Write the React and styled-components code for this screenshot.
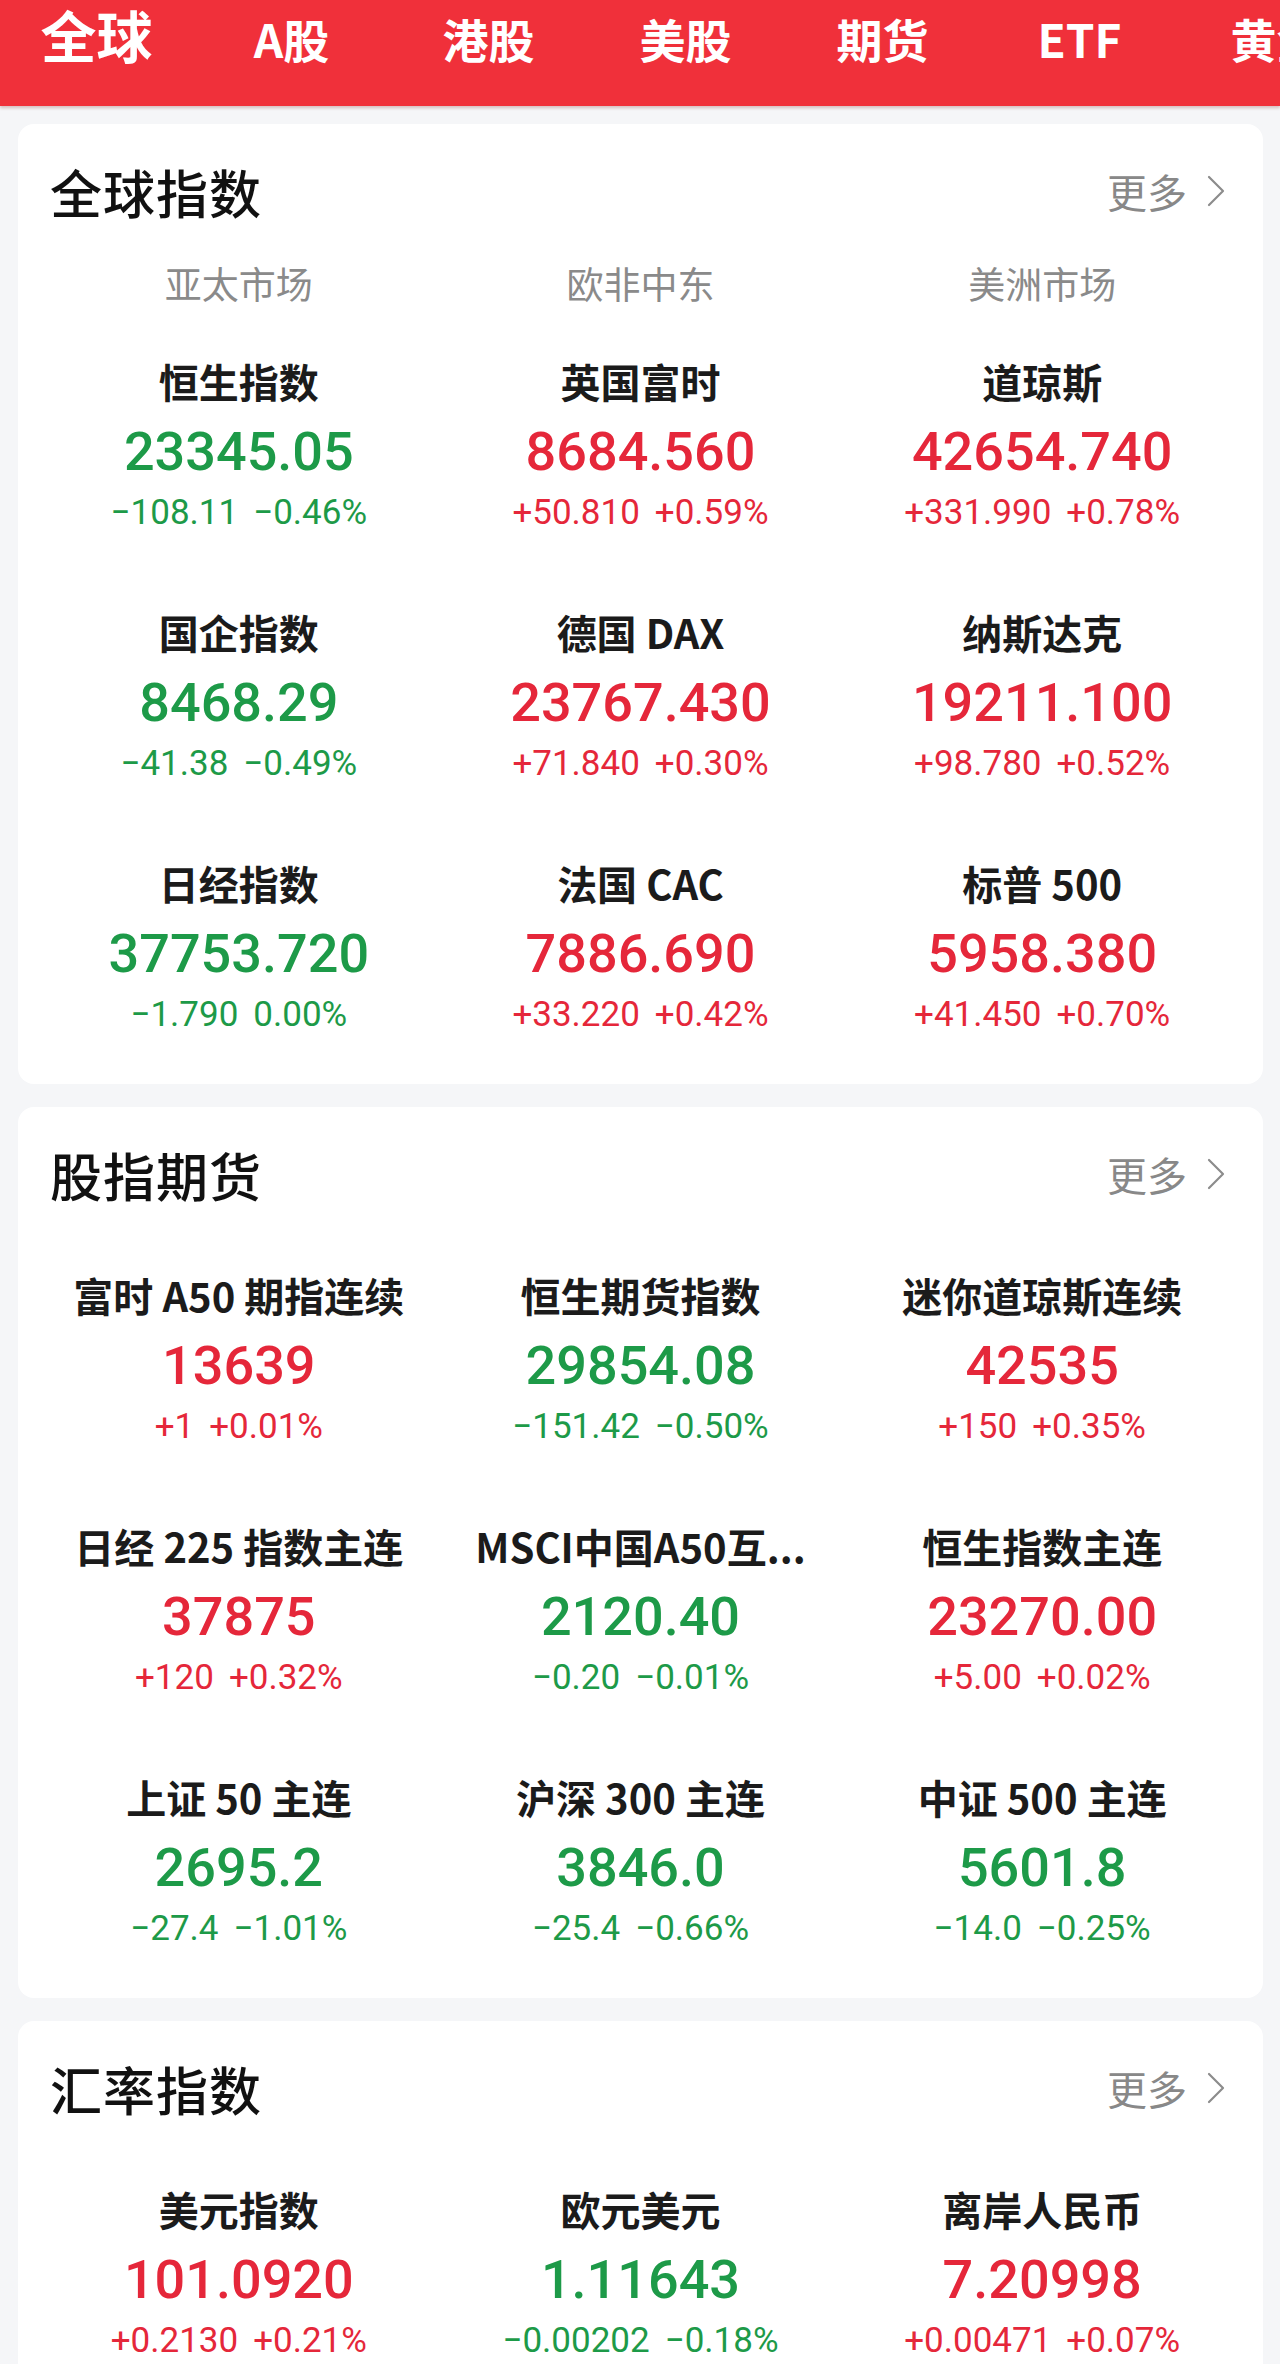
import React from "react";
import styled, { createGlobalStyle } from "styled-components";

const RED = "#e5273a";
const GREEN = "#1d9a48";

const tabs = ["全球", "A股", "港股", "美股", "期货", "ETF", "黄金", "外汇"];

const sections = [
  {
    title: "全球指数",
    regions: ["亚太市场", "欧非中东", "美洲市场"],
    items: [
      { name: "恒生指数", price: "23345.05", diff: "−108.11", pct: "−0.46%", up: false },
      { name: "英国富时", price: "8684.560", diff: "+50.810", pct: "+0.59%", up: true },
      { name: "道琼斯", price: "42654.740", diff: "+331.990", pct: "+0.78%", up: true },
      { name: "国企指数", price: "8468.29", diff: "−41.38", pct: "−0.49%", up: false },
      { name: "德国 DAX", price: "23767.430", diff: "+71.840", pct: "+0.30%", up: true },
      { name: "纳斯达克", price: "19211.100", diff: "+98.780", pct: "+0.52%", up: true },
      { name: "日经指数", price: "37753.720", diff: "−1.790", pct: "0.00%", up: false },
      { name: "法国 CAC", price: "7886.690", diff: "+33.220", pct: "+0.42%", up: true },
      { name: "标普 500", price: "5958.380", diff: "+41.450", pct: "+0.70%", up: true },
    ],
  },
  {
    title: "股指期货",
    items: [
      { name: "富时 A50 期指连续", price: "13639", diff: "+1", pct: "+0.01%", up: true },
      { name: "恒生期货指数", price: "29854.08", diff: "−151.42", pct: "−0.50%", up: false },
      { name: "迷你道琼斯连续", price: "42535", diff: "+150", pct: "+0.35%", up: true },
      { name: "日经 225 指数主连", price: "37875", diff: "+120", pct: "+0.32%", up: true },
      { name: "MSCI中国A50互...", price: "2120.40", diff: "−0.20", pct: "−0.01%", up: false },
      { name: "恒生指数主连", price: "23270.00", diff: "+5.00", pct: "+0.02%", up: true },
      { name: "上证 50 主连", price: "2695.2", diff: "−27.4", pct: "−1.01%", up: false },
      { name: "沪深 300 主连", price: "3846.0", diff: "−25.4", pct: "−0.66%", up: false },
      { name: "中证 500 主连", price: "5601.8", diff: "−14.0", pct: "−0.25%", up: false },
    ],
  },
  {
    title: "汇率指数",
    items: [
      { name: "美元指数", price: "101.0920", diff: "+0.2130", pct: "+0.21%", up: true },
      { name: "欧元美元", price: "1.11643", diff: "−0.00202", pct: "−0.18%", up: false },
      { name: "离岸人民币", price: "7.20998", diff: "+0.00471", pct: "+0.07%", up: true },
    ],
  },
];

function Chevron() {
  return (
    <svg width="18" height="32" viewBox="0 0 18 32" fill="none">
      <path d="M2 2 L16 16 L2 30" stroke="#8c8c8c" strokeWidth="2.2" strokeLinecap="round" strokeLinejoin="round" />
    </svg>
  );
}

function Quote({ item }) {
  const color = item.up ? RED : GREEN;
  return (
    <Cell>
      <Name>{item.name}</Name>
      <Price color={color}>{item.price}</Price>
      <Change color={color}>
        <span>{item.diff}</span>
        <span>{item.pct}</span>
      </Change>
    </Cell>
  );
}

function Section({ section }) {
  return (
    <Card>
      <CardHeader>
        <Title>{section.title}</Title>
        <More>
          更多
          <Chevron />
        </More>
      </CardHeader>
      {section.regions && (
        <Regions>
          {section.regions.map((r) => (
            <span key={r}>{r}</span>
          ))}
        </Regions>
      )}
      <QuoteGrid $withRegions={!!section.regions}>
        {section.items.map((item) => (
          <Quote key={item.name} item={item} />
        ))}
      </QuoteGrid>
    </Card>
  );
}

export default function App() {
  return (
    <Screen>
      <GlobalStyle />
      <TabBar>
        {tabs.map((t, i) => (
          <Tab key={t} $active={i === 0}>
            {t}
          </Tab>
        ))}
      </TabBar>
      <Content>
        {sections.map((s) => (
          <Section key={s.title} section={s} />
        ))}
      </Content>
    </Screen>
  );
}

const GlobalStyle = createGlobalStyle`
  html, body {
    margin: 0;
    padding: 0;
    background: #f5f6f8;
  }
  body {
    font-family: "Noto Sans CJK SC", "Noto Sans", sans-serif;
    -webkit-font-smoothing: antialiased;
  }
`;

const Screen = styled.div`
  height: 100vh;
  overflow: hidden;
  display: flex;
  flex-direction: column;
  background: #f5f6f8;
`;

const TabBar = styled.nav`
  flex: 0 0 106px;
  display: flex;
  align-items: flex-start;
  background: #f0303a;
  overflow: hidden;
  box-shadow: 0 2px 3px rgba(120, 20, 20, 0.25);
  position: relative;
  z-index: 1;
`;

const Tab = styled.div`
  flex: 0 0 ${({ $active }) => ($active ? "193px" : "197px")};
  text-align: center;
  color: #fff;
  font-weight: 700;
  font-size: ${({ $active }) => ($active ? "56px" : "46px")};
  line-height: 68px;
  padding-top: ${({ $active }) => ($active ? "0" : "4px")};
  white-space: nowrap;
`;

const Content = styled.main`
  flex: 1;
  overflow: hidden;
  display: flex;
  flex-direction: column;
  gap: 23px;
  padding: 18px 17px 0 18px;
`;

const Card = styled.section`
  background: #fff;
  border-radius: 16px;
  flex-shrink: 0;
`;

const CardHeader = styled.header`
  height: 134px;
  padding: 0 38px 6px 32px;
  display: flex;
  align-items: center;
  justify-content: space-between;
`;

const Title = styled.h2`
  margin: 0;
  font-size: 52px;
  font-weight: 500;
  color: #111;
  letter-spacing: 1px;
`;

const More = styled.div`
  display: flex;
  align-items: center;
  gap: 20px;
  font-size: 40px;
  color: #888;
`;

const Regions = styled.div`
  display: grid;
  grid-template-columns: repeat(3, 1fr);
  padding: 0 20px;
  line-height: 38px;
  font-size: 37px;
  color: #8a8a8a;
  text-align: center;
`;

const QuoteGrid = styled.div`
  display: grid;
  grid-template-columns: repeat(3, 1fr);
  row-gap: 72px;
  padding: ${({ $withRegions }) => ($withRegions ? "54px" : "23px")} 20px 47px;
`;

const Cell = styled.div`
  display: flex;
  flex-direction: column;
  align-items: center;
  min-width: 0;
`;

const Name = styled.div`
  font-size: 40px;
  font-weight: 700;
  line-height: 50px;
  color: #1b1b1b;
  white-space: nowrap;
`;

const Price = styled.div`
  margin-top: 11px;
  font-family: Roboto, "Liberation Sans", sans-serif;
  font-size: 54px;
  font-weight: 500;
  line-height: 70px;
  color: ${({ color }) => color};
`;

const Change = styled.div`
  margin-top: 4px;
  display: flex;
  gap: 15px;
  font-family: Roboto, "Liberation Sans", sans-serif;
  font-size: 35px;
  line-height: 44px;
  color: ${({ color }) => color};
`;
